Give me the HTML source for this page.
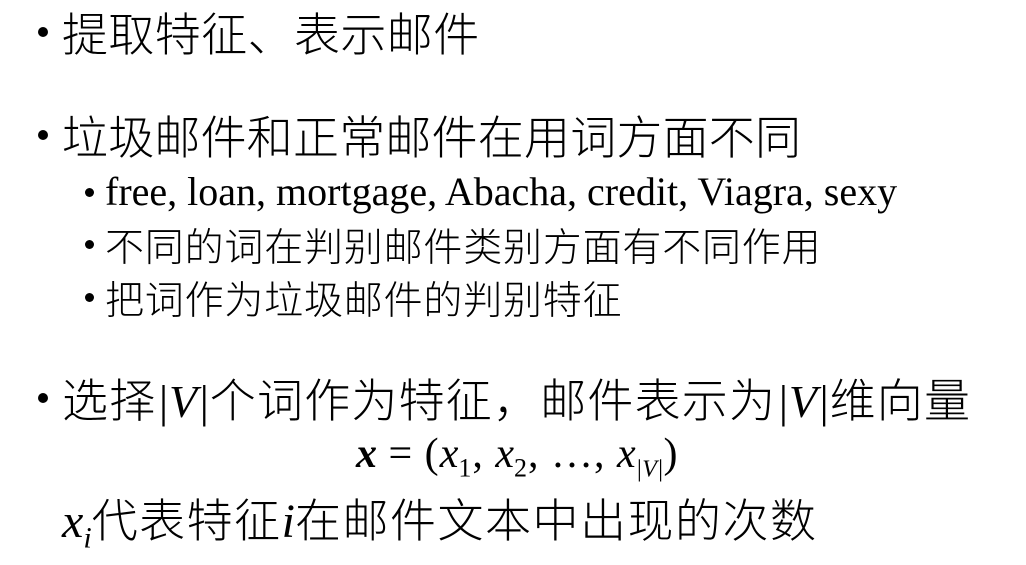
<!DOCTYPE html>
<html><head><meta charset="utf-8"><style>
html,body{margin:0;padding:0;background:#fff;width:1026px;height:558px;overflow:hidden}
.l{position:absolute;white-space:nowrap;color:#000;font-family:"Liberation Serif","Noto Sans CJK SC",serif;font-weight:300}
.c{font-family:"Noto Sans CJK SC","WenQuanYi Zen Hei",sans-serif;font-weight:300;letter-spacing:0.4px}
.m{font-family:"Liberation Serif",serif;font-style:italic;letter-spacing:0;font-weight:400}
.d{position:absolute;background:#000;border-radius:50%}
</style></head><body>
<div class="d" style="left:38px;top:27px;width:10px;height:10px"></div>
<div class="d" style="left:38px;top:130px;width:10px;height:10px"></div>
<div class="d" style="left:38px;top:393px;width:10px;height:10px"></div>
<div class="d" style="left:85px;top:188px;width:9px;height:9px"></div>
<div class="d" style="left:85px;top:240px;width:9px;height:9px"></div>
<div class="d" style="left:85px;top:293px;width:9px;height:9px"></div>
<div class="l c" style="left:62px;top:6px;font-size:46px;line-height:52px">提取特征、表示邮件</div>
<div class="l c" style="left:62px;top:109px;font-size:46px;line-height:52px;letter-spacing:0.2px">垃圾邮件和正常邮件在用词方面不同</div>
<div class="l" style="left:105px;top:170px;font-size:40px;line-height:44px">free, loan, mortgage, Abacha, credit, Viagra, sexy</div>
<div class="l c" style="left:105px;top:222px;font-size:39px;line-height:46px;letter-spacing:0.8px">不同的词在判别邮件类别方面有不同作用</div>
<div class="l c" style="left:105px;top:275px;font-size:39px;line-height:46px;letter-spacing:0.8px">把词作为垃圾邮件的判别特征</div>
<div class="l c" style="left:62px;top:372px;font-size:46px;line-height:52px;letter-spacing:1.2px">选择<span class="m">|V|</span>个词作为特征，邮件表示为<span class="m">|V|</span>维向量</div>
<div class="l" style="left:356px;top:430px;font-size:42px;line-height:48px;letter-spacing:1px;font-weight:400"><span class="m" style="font-weight:700">x</span> = (<span class="m">x</span><sub style="font-size:26px">1</sub>, <span class="m">x</span><sub style="font-size:26px">2</sub>, …, <span class="m">x</span><sub style="font-size:24px" class="m">|V|</sub>)</div>
<div class="l c" style="left:62px;top:492px;font-size:46px;line-height:52px;letter-spacing:1.5px"><span class="m" style="font-size:48px">x<sub style="font-size:30px">i</sub></span>代表特征<span class="m" style="font-size:48px">i</span>在邮件文本中出现的次数</div>
</body></html>
